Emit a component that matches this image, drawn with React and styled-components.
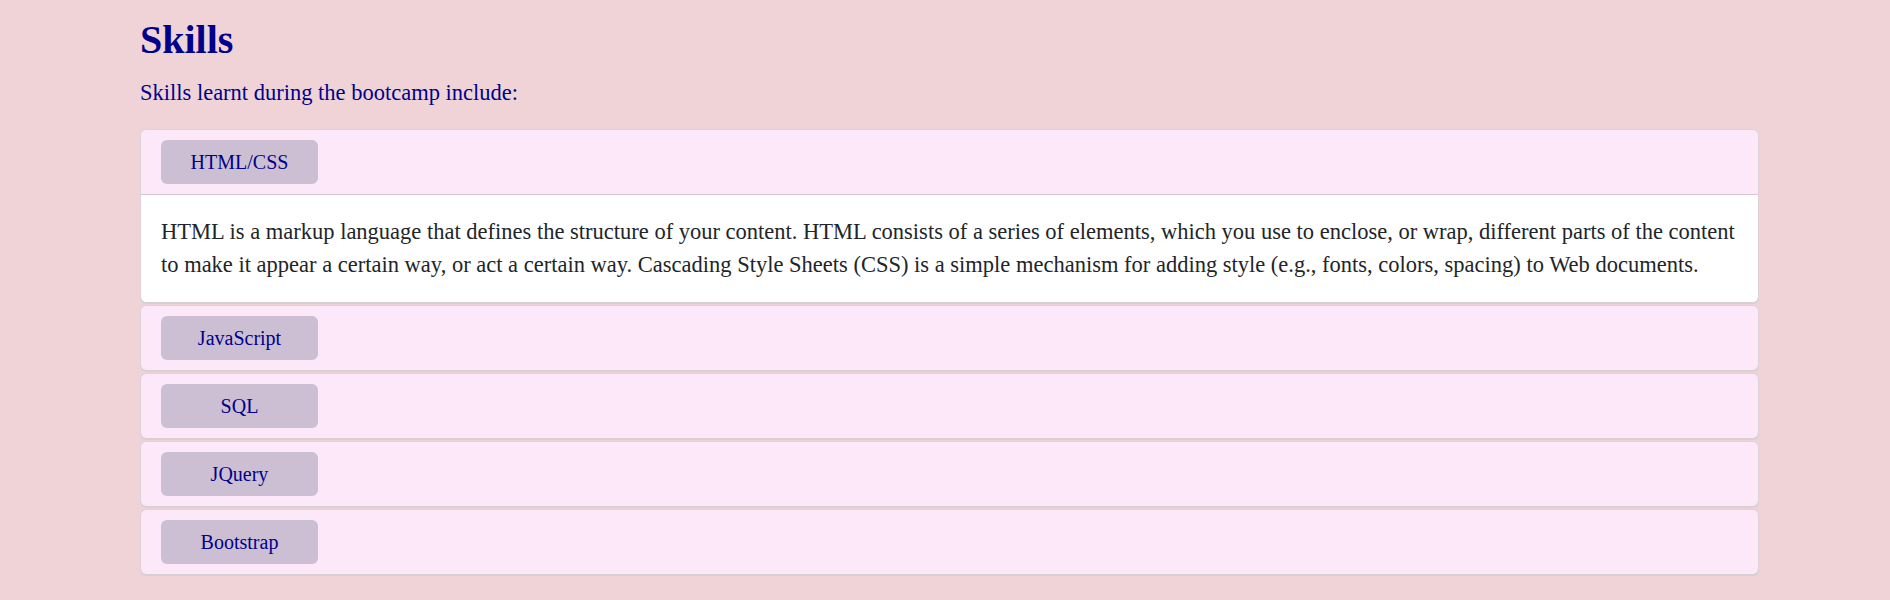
import React from 'react'
import styled, { createGlobalStyle } from 'styled-components'

const GlobalStyle = createGlobalStyle`
  body {
    margin: 0;
    background: #efd3d7;
    font-family: 'Liberation Serif', 'Times New Roman', serif;
  }
`

const Page = styled.main`
  padding: 0 131px 20px 140px;
`

const Title = styled.h1`
  margin: 16px 0 0;
  font-size: 40px;
  line-height: 1.2;
  font-weight: bold;
  color: #00008b;
`

const Intro = styled.p`
  margin: 12px 0 20px;
  font-size: 22.5px;
  line-height: 33px;
  color: #00008b;
`

const Accordion = styled.div`
  display: flex;
  flex-direction: column;
  gap: 3px;
`

const Card = styled.section`
  background: #fde8fa;
  border: 1px solid #ddd2da;
  border-bottom: 0;
  border-radius: 6px;
  box-shadow: 0 2px 0 #d6d0d3;
  overflow: hidden;
`

const Header = styled.div`
  padding: 10px 20px;
  border-bottom: ${props => (props.open ? '1px solid #d8c6d4' : '0')};
`

const Toggle = styled.button`
  display: flex;
  align-items: center;
  justify-content: center;
  width: 157px;
  height: 44px;
  border: 0;
  border-radius: 6px;
  background: #cdbfd3;
  color: #00008b;
  font-family: 'Liberation Serif', 'Times New Roman', serif;
  font-size: 20px;
  cursor: pointer;
`

const Body = styled.div`
  background: #fff;
  padding: 20px 20px 21px;
  font-size: 22.5px;
  line-height: 33px;
  color: #212529;
`

const skills = [
  {
    name: 'HTML/CSS',
    text:
      'HTML is a markup language that defines the structure of your content. HTML consists of a series of elements, which you use to enclose, or wrap, different parts of the content to make it appear a certain way, or act a certain way. Cascading Style Sheets (CSS) is a simple mechanism for adding style (e.g., fonts, colors, spacing) to Web documents.',
  },
  { name: 'JavaScript', text: '' },
  { name: 'SQL', text: '' },
  { name: 'JQuery', text: '' },
  { name: 'Bootstrap', text: '' },
]

export default function App() {
  const [open, setOpen] = React.useState(0)
  return (
    <Page>
      <GlobalStyle />
      <Title>Skills</Title>
      <Intro>Skills learnt during the bootcamp include:</Intro>
      <Accordion>
        {skills.map((s, i) => (
          <Card key={s.name}>
            <Header open={open === i}>
              <Toggle onClick={() => setOpen(open === i ? -1 : i)}>{s.name}</Toggle>
            </Header>
            {open === i && <Body>{s.text}</Body>}
          </Card>
        ))}
      </Accordion>
    </Page>
  )
}
